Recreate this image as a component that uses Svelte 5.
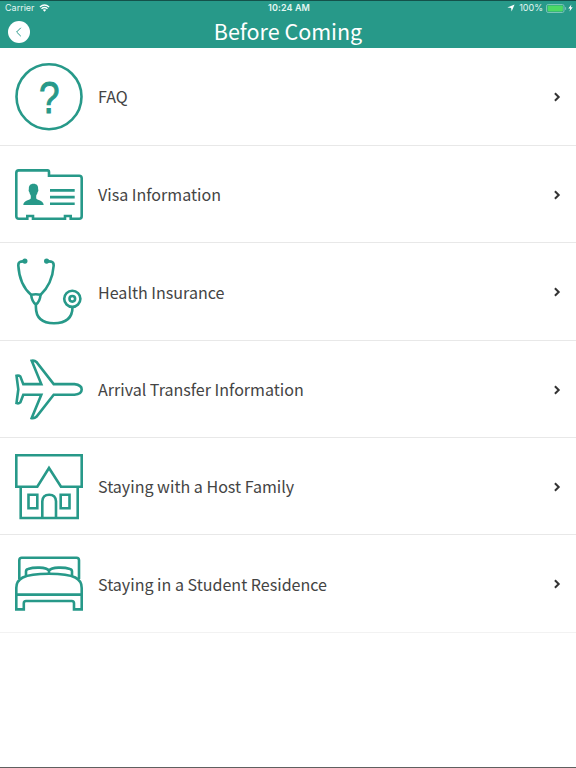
<script>
  const items = [
    { icon: "faq", label: "FAQ" },
    { icon: "visa", label: "Visa Information" },
    { icon: "health", label: "Health Insurance" },
    { icon: "plane", label: "Arrival Transfer Information" },
    { icon: "house", label: "Staying with a Host Family" },
    { icon: "bed", label: "Staying in a Student Residence" },
  ];
</script>

<div class="screen">
  <header>
    <div class="status">
      <div class="side">
        <span>Carrier</span>
        <svg class="wifi" viewBox="0 0 12 9">
          <path d="M.8 3.3Q6-1 11.2 3.3M2.6 5.3Q6 2.6 9.4 5.3" />
          <path class="solid" d="M4 6.6Q6 5 8 6.6L6 8.8Z" />
        </svg>
      </div>
      <div class="time">10:24 AM</div>
      <div class="side right">
        <svg class="location" viewBox="0 0 8 8">
          <path d="M7.6.4 4.6 7.6 4.1 3.9.4 3.4Z" />
        </svg>
        <span>100%</span>
        <svg class="battery" viewBox="0 0 21 9">
          <rect class="case" x="0.5" y="0.5" width="17.5" height="8" rx="1.6" />
          <rect class="level" x="1.6" y="1.6" width="15.3" height="5.8" rx="0.8" />
          <path class="case" d="M19.6 3.2v2.6" />
        </svg>
        <svg class="bolt" viewBox="0 0 5 8">
          <path d="M3.4.4.3 4.6H2.2L1.5 7.6 4.7 3.3H2.8Z" />
        </svg>
      </div>
    </div>
    <div class="navbar">
      <button class="back" aria-label="Back">
        <svg viewBox="0 0 22 22">
          <path d="M12.8 6.8 8.6 11l4.2 4.2" />
        </svg>
      </button>
      <h1>Before Coming</h1>
      <div class="balance"></div>
    </div>
  </header>

  <ul>
    {#each items as item}
      <li>
        <svg class="icon" viewBox="0 0 72 97">
          {#if item.icon === "faq"}
            <circle cx="36" cy="49.7" r="32.5" />
            <text transform="translate(36.2 66.1) scale(0.82 1)" text-anchor="middle">?</text>
          {:else if item.icon === "visa"}
            <path
              d="M5.8 25.4H34.5Q36 25.4 36 27V30.8H66.2Q68.7 30.8 68.7 33.3V71.3Q68.7 73.8 66.2 73.8H57.7V71H52V73.8H20V71H14.3V73.8H5.8Q3.3 73.8 3.3 71.3V27.9Q3.3 25.4 5.8 25.4Z"
            />
            <path d="M37 45.4H61.7M37 52.1H61.7M37 58.8H61.7" />
            <path
              class="solid"
              d="M20.5 38.8C23.9 38.8 25.4 41 25.1 44.3C25.7 44.9 25.3 46.5 24.6 47.2C24.3 49 23.5 49.8 23.2 50.7V53.2C23.5 55.3 30.7 55 30.7 60.1H10.3C10.3 55 17.5 55.3 17.8 53.2V50.7C17.5 49.8 16.7 49 16.4 47.2C15.7 46.5 15.3 44.9 15.9 44.3C15.6 41 17.1 38.8 20.5 38.8Z"
            />
          {:else if item.icon === "health"}
            <circle class="solid" cx="11.9" cy="19.1" r="2.6" />
            <circle class="solid" cx="33.6" cy="19.1" r="2.6" />
            <path
              d="M11.9 19.1L8 19.6Q5.2 20.2 5.3 23.5C6 35.5 10.5 46.5 18.5 53.3M33.6 19.1L38 19.6Q40.8 20.2 40.7 23.5C39.8 35.5 35.5 45.5 27.2 53.3"
            />
            <path d="M18.2 52.8Q22.8 51.6 27.5 52.8Q27 59.5 22.9 62.4Q18.8 59.5 18.2 52.8Z" />
            <path d="M22.9 62V65C22.9 76 29.5 81.2 41 81.2C52.5 81.2 59.5 76 59.5 65" />
            <circle cx="59.3" cy="56.8" r="8.1" />
            <circle cx="59.3" cy="56.8" r="2.8" />
          {:else if item.icon === "plane"}
            <path
              d="M40.7 44.1H61.5Q68.7 45 68.7 49.4Q68.7 53.8 61.5 54.7H40.7L23.4 76.8Q21.5 78.6 18.7 78.1L28.3 54.7H10.3L7.3 62.4Q5.8 63.8 3.5 63.1L5.3 49.4L3.5 35.7Q5.8 35 7.3 36.4L10.3 44.1H28.3L18.7 20.7Q21.5 20.2 23.4 22Z"
            />
          {:else if item.icon === "house"}
            <path d="M3.3 18.3H68.7V49.7H48L36 31L24.3 49.7H3.3Z" />
            <path d="M7.7 49.7V81H64.7V49.7" />
            <path d="M29.3 81V64.4Q29.6 57.7 36.2 57.7Q42.7 57.7 43 64.4V81" />
            <path d="M15.5 57.7H24.3V71.3H15.5ZM47.7 57.7H56.5V71.3H47.7Z" />
          {:else}
            <path d="M6.3 45V26.2Q6.3 23.7 8.8 23.7H63.5Q66 23.7 66 26.2V45" />
            <path
              d="M13 42V37.5Q13 35.5 15 35C21 33 33 32.8 36 36.6C39 32.8 51 33 57 35Q59 35.5 59 37.5V42M36 36.6V40"
            />
            <path
              d="M3.3 60.6V54C3.3 45 9.5 39.7 36 39.7C62.5 39.7 68.7 45 68.7 54V75.4H61V69.2Q61 67 58.8 67H13Q10.8 67 10.8 69.2V75.4H3.3V60.6H68.7"
            />
          {/if}
        </svg>
        <span class="label">{item.label}</span>
        <svg class="chevron" viewBox="0 0 8 10">
          <path d="M1.9 1.3 5.7 5 1.9 8.7" />
        </svg>
      </li>
    {/each}
  </ul>
</div>

<style>
  :global(body) {
    margin: 0;
    background: #fff;
  }

  .screen {
    height: 768px;
    box-sizing: border-box;
    overflow: hidden;
    background: #fff;
    border-bottom: 1px solid #606060;
    font-family: "Noto Sans CJK SC", "Noto Sans", sans-serif;
    color: #444;
  }

  header {
    height: 47.5px;
    box-sizing: border-box;
    border-top: 1px solid #14514a;
    background: #279989;
    color: #fff;
  }

  .status {
    display: flex;
    align-items: center;
    height: 14px;
    padding: 0 3px 0 5px;
    font: 9px/14px Inter, "Liberation Sans", sans-serif;
    color: #e4f6f2;
  }

  .side {
    flex: 1;
    display: flex;
    align-items: center;
    gap: 4px;
  }

  .right {
    justify-content: flex-end;
    gap: 3px;
  }

  .time {
    font-weight: 600;
    letter-spacing: 0.1px;
  }

  .wifi {
    width: 11px;
    height: 8px;
    fill: none;
    stroke: #fff;
    stroke-width: 1.5;
  }

  .wifi .solid {
    fill: #fff;
    stroke: none;
  }

  .location {
    width: 8px;
    height: 8px;
    margin-right: 1px;
    fill: #fff;
  }

  .battery {
    width: 21px;
    height: 9px;
  }

  .case {
    fill: none;
    stroke: #7cc4b9;
    stroke-width: 1;
  }

  .level {
    fill: #4cd964;
  }

  .bolt {
    width: 5px;
    height: 8px;
    margin-left: -2px;
    fill: #fff;
  }

  .navbar {
    display: flex;
    align-items: center;
    height: 33px;
    padding: 0 8px;
  }

  .back {
    width: 22px;
    height: 22px;
    padding: 0;
    border: 0;
    border-radius: 50%;
    background: #fff;
  }

  .back svg {
    display: block;
    fill: none;
    stroke: #279989;
    stroke-width: 1;
  }

  .balance {
    width: 22px;
  }

  h1 {
    flex: 1;
    margin: 0;
    padding-bottom: 1px;
    font-size: 21.5px;
    font-weight: 400;
    line-height: 32px;
    text-align: center;
  }

  ul {
    margin: 0;
    padding: 0;
    list-style: none;
    border-bottom: 1px solid #f2f2f2;
  }

  li {
    display: flex;
    align-items: center;
    height: 97.37px;
    box-sizing: border-box;
    padding: 0 15px 0 13px;
  }

  li + li {
    border-top: 1px solid #e8e8e8;
  }

  .icon {
    width: 72px;
    height: 97px;
    flex: none;
    margin: 0 13px 1.4px 0;
    fill: none;
    stroke: #279989;
    stroke-width: 2.6;
  }

  .icon .solid {
    fill: #279989;
    stroke: none;
  }

  .icon text {
    font: 45px "Liberation Sans", Arial, sans-serif;
    fill: #279989;
    stroke-width: 1;
  }

  .label {
    flex: 1;
    padding-top: 0.4px;
    font-size: 16.07px;
    line-height: 24px;
  }

  .chevron {
    width: 8px;
    height: 10px;
    margin-top: 2px;
    fill: none;
    stroke: #333;
    stroke-width: 2;
  }
</style>
